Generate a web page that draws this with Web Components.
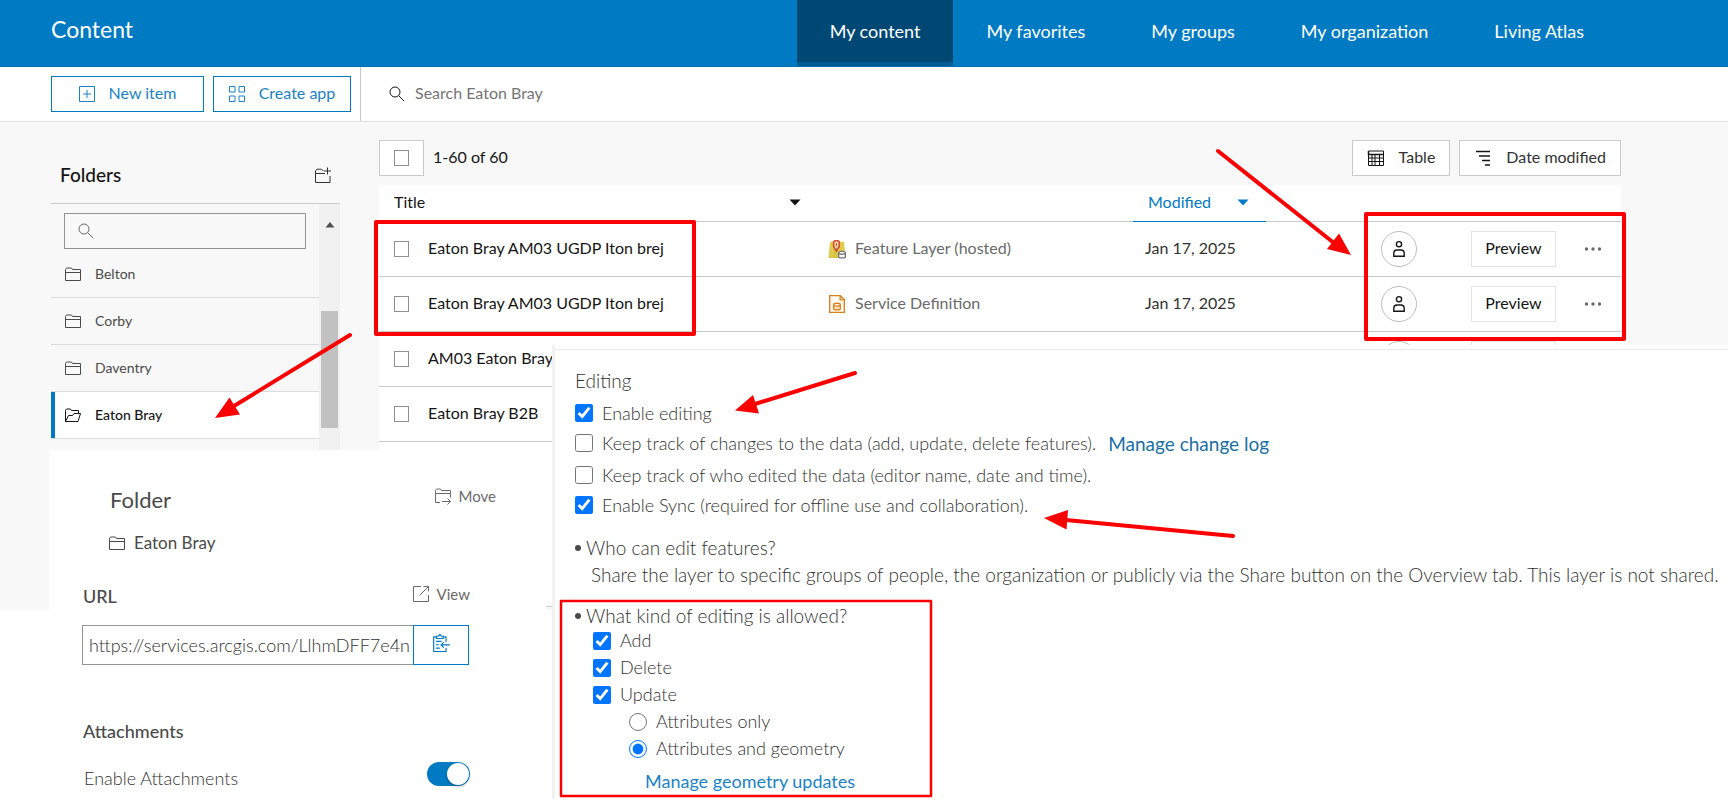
<!DOCTYPE html>
<html lang="en">
<head>
<meta charset="utf-8">
<title>Content</title>
<style>
  body { margin: 0; background: #fff; color: #323232; font: 16px/24px Lato, "Open Sans", sans-serif; }
</style>
</head>
<body>
<content-page></content-page>
<script>
const define = (name, html, setup) => customElements.define(name, class extends HTMLElement {
  connectedCallback() {
    if (this.shadowRoot) return;
    const tpl = document.createElement('template');
    tpl.innerHTML = typeof html === 'function' ? html(this) : html;
    this.attachShadow({ mode: 'open' }).append(tpl.content.cloneNode(true));
    if (setup) setup(this);
  }
});

/* Line icons on a 16 x 16 grid */
const ICONS = {
  plus: '<path d="M.5.5h15v15H.5zM8 4v8M4 8h8"/>',
  grid: '<path d="M.5.5h5.500v5.500H.5zM10 .5h5.500v5.500H10zM.5 10h5.500v5.500H.5zM10 10h5.500v5.500H10z"/>',
  search: '<circle cx="6" cy="6" r="5"/><path d="M9.600 9.600l5.600 5.600"/>',
  folder: '<path d="M.5 14.500v-11l1-1.500h5l1 1.500h8v11zM.5 6.500h15"/>',
  open: '<path d="M.5 14.500v-11l1-1.500h4l1 1.500h7v3M.5 14.500l3-6h4l1.500-2h6.500l-2.500 8z"/>',
  add: '<path d="M8.500 3.500h-1l-1-1.300h-4.500L.5 4v11.500h14.500V9M.5 6.500h9.500M12.500.5v7M9 4h7"/>',
  move: '<path d="M5 14.500H.5v-12l1-1.500h4l1 1.500h9v7M.5 5.500h15M7 13.500h8.500M12.500 10.500l3 3-3 3"/>',
  launch: '<path d="M8 .5H.5v15h15V9M10.500.5h5v5M15.500.5L6.500 9.500"/>',
  table: '<path d="M.5 1h15v14.500H.5zM.5 4.500h15M.5 8h15M.5 11.500h15M4 4.500v11M7 4.500v11M11.500 4.500v11"/><path d="M.5 1v3.500h15" stroke-width="1.500"/>',
  sort: '<path stroke-width="1.300" d="M1 1.500h14M4 6h11M7 10.500h8M10 15h5"/>',
  clip: '<path d="M4 2.500H1.500v13h11v-3M12.500 7V2.500H10M4 4V2h1.500L7 .5 8.500 2H10v2zM3.500 6.500h5M3.500 9.500h2.500M3.500 12.500h3.500M15.800 9.700H8M10.500 7.200L8 9.700l2.500 2.500"/>',
  person: '<g stroke-width="1.400"><circle cx="8" cy="3.200" r="2.600"/><path d="M2.800 15.300v-3q0-3.300 3.200-3.300h4q3.200 0 3.200 3.300v3z"/></g>',
  dots: '<g fill="currentColor" stroke="none"><circle cx="1.500" cy="8" r="1.700"/><circle cx="8" cy="8" r="1.700"/><circle cx="14.500" cy="8" r="1.700"/></g>',
  caret: '<path fill="currentColor" stroke="none" d="M2.500 5.500h11l-5.500 6z"/>',
  up: '<path fill="currentColor" stroke="none" d="M3.500 10.500h9l-4.500-5.500z"/>',
  layer: '<g stroke="none"><path fill="#e0cb4e" d="M1.800 1.500h12.400l1.500 14.500H.3z"/><path fill="#c9b63f" d="M5 8l3 2v6H4zM11 8l2 1 .5 7h-2z" opacity=".4"/></g><path stroke="#d2492a" stroke-width="1.400" fill="#f3d9b0" d="M7.500 9.800L5 5.800V2.500Q5 .7 6.500.7h2q1.500 0 1.500 1.800v3.300z"/><path stroke="#d2492a" d="M7.500 2.800v2.500"/><path stroke="#6a6a6a" fill="#f4f4f4" d="M9.500 11.500v3.300q0 1.200 3 1.200t3-1.200v-3.300"/><ellipse stroke="#6a6a6a" fill="#f4f4f4" cx="12.500" cy="11.300" rx="3" ry="1.300"/>',
  service: '<g stroke="#d9831f" stroke-width="1.200"><path fill="#fffaf0" d="M1.500.6h9.500l3.500 3.500v11.300h-13z"/><path d="M10.800.6v3.700h3.700"/><path fill="#fde3b8" d="M5 8.800v3.200q0 1.200 3 1.200t3-1.200V8.800"/><ellipse fill="#fff" cx="8" cy="8.600" rx="3" ry="1.300"/></g>'
};
define('line-icon', el => `<style>
  :host { display: inline-block; flex: none; width: 16px; height: 16px; }
  svg { display: block; width: 100%; height: 100%; overflow: visible; fill: none; stroke: currentColor; stroke-width: 1; }
</style><svg viewBox="0 0 16 16" aria-hidden="true">${ICONS[el.getAttribute('name')]}</svg>`);

define('site-header', `<style>
  :host { display: block; background: #007ac2; border-bottom: 1px solid #006eaf; color: #fff; }
  .bar { display: flex; justify-content: space-between; height: 66px; padding: 0 111px 0 51px; }
  h1 { margin: 0; font-size: 23px; line-height: 58px; font-weight: 400; }
  nav { display: flex; }
  a { padding: 0 33px; font-size: 18px; line-height: 62px; color: inherit; text-decoration: none; }
  a[aria-current] { background: #004874; border-bottom: 4px solid #005c92; }
</style>
<div class="bar"><h1>Content</h1><nav>
  <a href="#content" aria-current="page">My content</a><a href="#favorites">My favorites</a><a href="#groups">My groups</a><a href="#organization">My organization</a><a href="#atlas">Living Atlas</a>
</nav></div>`);

define('tool-button', `<style>
  :host { display: inline-flex; }
  button { flex: 1; display: flex; align-items: center; justify-content: center; gap: 14px; height: 36px; box-sizing: border-box;
    padding: 0 14px; border: 1px solid var(--edge, #cacaca); background: #fff; color: inherit; font: inherit; white-space: nowrap; }
  span { padding-bottom: 2px; }
</style><button type="button"><slot name="icon"></slot><span><slot></slot></span></button>`);

define('action-bar', `<style>
  :host { display: flex; height: 54px; border-bottom: 1px solid #dfdfdf; background: #fff; }
  .actions { display: flex; gap: 9px; align-items: center; padding: 0 9px 0 51px; border-right: 1px solid #cacaca; color: #1a83c5; --edge: #007ac2; }
  .new { width: 153px; } .create { width: 138px; }
  label { flex: 1; display: flex; align-items: center; gap: 10px; padding-left: 28px; color: #151515; }
  input { flex: 1; border: 0; padding: 0 0 2px; outline: 0; background: none; font: inherit; }
  input::placeholder { color: #757575; }
</style>
<div class="actions">
  <tool-button class="new"><line-icon slot="icon" name="plus"></line-icon>New item</tool-button>
  <tool-button class="create"><line-icon slot="icon" name="grid"></line-icon>Create app</tool-button>
</div>
<label><line-icon name="search"></line-icon><input type="search" aria-label="Search" placeholder="Search Eaton Bray"></label>`);

define('folder-item', el => `<style>
  :host { display: block; border-bottom: 1px solid #dcdcdc; font-size: 14px; color: #4a4a4a; }
  :host([selected]) { background: #fff; color: #151515; font-weight: 500; box-shadow: inset 4px 0 #007ac2; }
  a { display: flex; align-items: center; gap: 14px; height: 46px; padding-left: 14px; color: inherit; text-decoration: none; }
</style><a href="#folder"><line-icon name="${el.hasAttribute('selected') ? 'open' : 'folder'}"></line-icon><span><slot></slot></span></a>`);

define('folder-list', `<style>
  :host { display: block; }
  header { display: flex; align-items: center; justify-content: space-between; height: 82px; padding: 24px 9px 0; box-sizing: border-box; border-bottom: 1px solid #cacaca; }
  h2 { margin: 0; font-size: 19px; font-weight: 500; color: #151515; }
  .body { display: flex; height: 246px; }
  .list { flex: 1; min-width: 0; }
  .find { display: flex; align-items: center; gap: 10px; height: 36px; margin: 9px 13px 2px; padding: 0 13px; box-sizing: border-box; border: 1px solid #949494; color: #6a6a6a; }
  input { flex: 1; min-width: 0; border: 0; outline: 0; background: none; font: inherit; }
  .scroll { display: flex; flex-direction: column; align-items: center; width: 21px; padding-top: 13px; box-sizing: border-box; background: #f1f1f1; color: #505050; }
  .thumb { width: 17px; height: 117px; margin-top: 78px; background: #c1c1c1; }
</style>
<header><h2>Folders</h2><line-icon name="add"></line-icon></header>
<div class="body">
  <div class="list">
    <label class="find"><line-icon name="search"></line-icon><input type="search" aria-label="Find a folder"></label>
    <folder-item>Belton</folder-item><folder-item>Corby</folder-item><folder-item>Daventry</folder-item><folder-item selected>Eaton Bray</folder-item>
  </div>
  <div class="scroll" aria-hidden="true"><line-icon name="up"></line-icon><div class="thumb"></div></div>
</div>`);

const ROWS = [
  ['Eaton Bray AM03 UGDP Iton brej', 'layer', 'Feature Layer (hosted)', 'Jan 17, 2025', 'Preview'],
  ['Eaton Bray AM03 UGDP Iton brej', 'service', 'Service Definition', 'Jan 17, 2025', 'Preview'],
  ['AM03 Eaton Bray', '', '', '', ''],
  ['Eaton Bray B2B', '', '', '', '']
];
define('item-list', `<style>
  :host { display: flex; flex-direction: column; color: #151515; }
  .top { display: flex; align-items: center; gap: 9px; height: 36px; padding: 18px 0 9px; }
  .count { flex: 1; padding-bottom: 2px; }
  .all { display: flex; align-items: center; justify-content: center; width: 45px; height: 36px; box-sizing: border-box; border: 1px solid #cacaca; background: #fff; }
  .dark { color: #323232; }
  .dark line-icon { width: 18px; color: #151515; }
  .sheet { flex: 1; background: #fff; border-bottom: 1px solid #cacaca; }
  input { appearance: none; display: block; width: 15px; height: 16px; margin: 0; border: 1px solid #8f8f8f; background: #fff; }
  table { width: 100%; table-layout: fixed; border-collapse: separate; border-spacing: 0; }
  th, td { box-sizing: border-box; padding: 0; text-align: left; font-weight: 400; border-bottom: 1px solid #cacaca; white-space: nowrap; }
  th { height: 37px; } td { height: 55px; }
  .pick { width: 49px; } .type { width: 305px; } .date { width: 133px; } .acts { width: 355px; }
  th > div, .kind, .tools { display: flex; align-items: center; }
  .name { justify-content: space-between; padding: 0 25px 2px 15px; }
  .sorted { color: #007ac2; border-bottom-color: #007ac2; }
  .sorted div { justify-content: space-between; padding: 0 15px 2px; }
  td:first-child { padding-left: 15px; }
  .title, .kind span, .when { padding-bottom: 2px; }
  .kind { gap: 9px; color: #6a6a6a; }
  .kind line-icon { width: 18px; height: 18px; }
  .when { padding-left: 12px; color: #323232; }
  .tools { padding-left: 115px; }
  .avatar { display: flex; align-items: center; justify-content: center; width: 36px; height: 36px; box-sizing: border-box; border: 1px solid #bdbdbd; border-radius: 50%; }
  button { font: inherit; color: inherit; background: #fff; padding: 0; }
  .preview { width: 85px; height: 36px; margin: 0 29px 0 54px; padding-bottom: 2px; border: 1px solid #e3e3e3; }
  .more { display: flex; border: 0; color: #6a6a6a; }
</style>
<div class="top">
  <label class="all"><input type="checkbox" aria-label="Select all"></label><span class="count">1-60 of 60</span>
  <tool-button class="dark"><line-icon slot="icon" name="table"></line-icon>Table</tool-button>
  <tool-button class="dark"><line-icon slot="icon" name="sort"></line-icon>Date modified</tool-button>
</div>
<div class="sheet"><table>
  <colgroup><col class="pick"><col><col class="type"><col class="date"><col class="acts"></colgroup>
  <thead><tr><th colspan="2"><div class="name">Title<line-icon name="caret"></line-icon></div></th><th></th>
    <th class="sorted"><div>Modified<line-icon name="caret"></line-icon></div></th><th></th></tr></thead>
  <tbody>${ROWS.map(([title, icon, kind, date, preview]) => `<tr>
    <td><input type="checkbox" aria-label="Select ${title}"></td><td class="title">${title}</td>
    <td><div class="kind">${icon && `<line-icon name="${icon}"></line-icon>`}<span>${kind}</span></div></td>
    <td class="when">${date}</td>
    <td><div class="tools"><span class="avatar"><line-icon name="person"></line-icon></span>
      <button type="button" class="preview" aria-label="Preview ${title}">${preview}</button>
      <button type="button" class="more" aria-label="More"><line-icon name="dots"></line-icon></button></div></td></tr>`).join('')}
  </tbody>
</table></div>`);

define('item-details', `<style>
  :host { display: block; box-sizing: border-box; background: #fff; color: #4a4a4a; }
  h2, h3, p { margin: 0; }
  h2 { font-size: 22px; line-height: 28px; font-weight: 400; }
  h3 { font-size: 18px; line-height: 24px; font-weight: 500; }
  .line { display: flex; justify-content: space-between; }
  .folder { padding: 36px 50px 0 61px; }
  .url { padding: 29px 76px 0 34px; }
  a { display: flex; align-items: center; gap: 8px; height: 20px; font-size: 15px; color: #6a6a6a; text-decoration: none; }
  .name { display: flex; align-items: center; gap: 9px; padding: 17px 60px 0; font-size: 17px; line-height: 24px; }
  .field { display: flex; height: 40px; margin: 17px 77px 0 33px; }
  input[type=text] { flex: 1; min-width: 0; box-sizing: border-box; padding: 0 0 0 6px; border: 1px solid #949494; border-right: 0; outline: 0; font: 300 18px Lato, sans-serif; color: #323232; }
  button { width: 56px; border: 1px solid #007ac2; background: #fff; color: #007ac2; display: flex; align-items: center; justify-content: center; padding: 0 0 4px; }
  button line-icon { width: 18px; height: 18px; }
  h3.attach { padding: 54px 34px 0; }
  .toggle { align-items: center; padding: 19px 76px 0 35px; font-size: 18px; line-height: 26px; font-weight: 300; color: #323232; }
  .toggle input { appearance: none; position: relative; width: 43px; height: 24px; margin: 0 0 8px; border-radius: 12px; background: #007ac2; }
  .toggle input::after { content: ""; position: absolute; top: 1px; right: 1px; width: 22px; height: 22px; border-radius: 50%; background: #fff; box-shadow: 0 2px 3px #0003; }
</style>
<div class="line folder"><h2>Folder</h2><a href="#move"><line-icon name="move"></line-icon>Move</a></div>
<p class="name"><line-icon name="folder"></line-icon>Eaton Bray</p>
<div class="line url"><h3>URL</h3><a href="#view"><line-icon name="launch"></line-icon>View</a></div>
<div class="field"><input type="text" aria-label="URL" value="https://services.arcgis.com/LlhmDFF7e4n"><button type="button" aria-label="Copy"><line-icon name="clip"></line-icon></button></div>
<h3 class="attach">Attachments</h3>
<div class="line toggle"><label for="att">Enable Attachments</label><input id="att" type="checkbox" role="switch" checked></div>`);

define('choice-row', el => `<style>
  :host { display: flex; align-items: center; height: var(--row, 27px); font-size: 18px; font-weight: 300; white-space: nowrap; }
  label { display: flex; align-items: center; gap: 9px; }
  input { width: 18px; height: 18px; margin: 0; accent-color: #0075ff; }
</style><label><input type="${el.getAttribute('type') || 'checkbox'}" ${el.hasAttribute('checked') ? 'checked' : ''}><slot></slot></label><slot name="link"></slot>`);

define('editing-settings', `<style>
  :host { display: block; box-sizing: border-box; padding-top: 4px; border-left: 3px solid #f2f2f2; background: #fff; color: #323232; font-size: 19px; line-height: 27px; font-weight: 300; white-space: nowrap; }
  .inner { border-top: 1px solid #e9e9e9; padding: 19px 0 4px 20px; }
  h2, h3, p { margin: 0; font: inherit; }
  h2 { line-height: 24px; margin-bottom: 5px; }
  .pair { --row: 30px; margin-bottom: 2px; }
  h3 { display: flex; margin-top: 14px; }
  h3::before { content: ""; width: 6px; height: 6px; margin: 11px 5px 0 0; border-radius: 50%; background: #4a4a4a; }
  p { padding-left: 16px; margin-bottom: 14px; }
  .kinds { margin-top: -2px; padding-left: 18px; }
  .sub { padding-left: 36px; }
  a { color: #00619b; text-decoration: none; }
  .log { margin-left: 12px; font-size: 19px; font-weight: 400; color: #1a70a5; }
  .geo { display: block; width: max-content; margin: 6px 0 0 70px; font-size: 18px; font-weight: 400; color: #1a83c5; }
</style>
<div class="inner">
  <h2>Editing</h2>
  <div class="pair"><choice-row checked>Enable editing</choice-row>
  <choice-row>Keep track of changes to the data (add, update, delete features).<a slot="link" class="log" href="#log">Manage change log</a></choice-row></div>
  <div class="pair"><choice-row>Keep track of who edited the data (editor name, date and time).</choice-row>
  <choice-row checked>Enable Sync (required for offline use and collaboration).</choice-row></div>
  <h3>Who can edit features?</h3>
  <p>Share the layer to specific groups of people, the organization or publicly via the Share button on the Overview tab. This layer is not shared.</p>
  <h3>What kind of editing is allowed?</h3>
  <div class="kinds"><choice-row checked>Add</choice-row><choice-row checked>Delete</choice-row><choice-row checked>Update</choice-row>
    <div class="sub"><choice-row type="radio">Attributes only</choice-row><choice-row type="radio" checked>Attributes and geometry</choice-row></div></div>
  <a class="geo" href="#geometry">Manage geometry updates</a>
</div>`);

/* Red callouts laid over the page */
define('callout-layer', `<style>
  :host { display: block; pointer-events: none; }
  svg { display: block; overflow: visible; }
</style><svg width="1" height="1" fill="none" stroke="#fa0000" stroke-width="4" stroke-linecap="round" stroke-linejoin="round" aria-hidden="true">
  <rect x="376" y="222" width="318" height="112"/><rect x="1366" y="214" width="258" height="125"/>
  <rect x="561" y="601" width="370" height="195" stroke-width="2.500"/>
  <path d="M350 335L234 406M1218 151L1334 243M855 373L755 404M1233 536L1066 520"/>
  <g fill="#fa0000" stroke="none"><path d="M215 418l14.500-20.500 10.500 17zM1351 255l-12-21.500-12 15.500zM735 410.500l18-15.500 6 18.500zM1044 518l24-8-1.500 19.500z"/></g>
</svg>`);

define('content-page', `<style>
  :host { display: block; position: relative; }
  main { display: grid; grid-template-columns: 289px minmax(0, 1fr); column-gap: 39px; min-height: 682px; padding: 0 107px 0 51px; box-sizing: border-box;
    background: linear-gradient(#f8f8f8, #f8f8f8) top / 100% 488px no-repeat; position: relative; }
  folder-list { align-self: start; }
  item-list { margin-bottom: 197px; }
  item-details { position: absolute; top: 328px; left: 49px; width: 497px; height: 350px; }
  editing-settings { position: absolute; top: 223px; left: 552px; right: 0; }
  callout-layer { position: absolute; top: 0; left: 0; }
</style>
<site-header></site-header><action-bar></action-bar>
<main><folder-list></folder-list><item-list></item-list><item-details></item-details><editing-settings></editing-settings></main>
<callout-layer></callout-layer>`);
</script>
</body>
</html>
